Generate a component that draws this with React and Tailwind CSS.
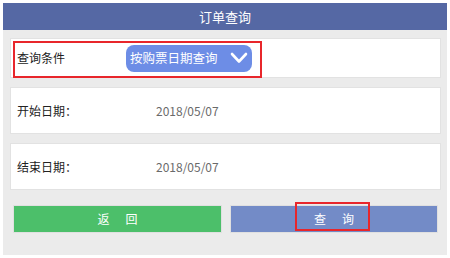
import React from 'react'

const font = { fontFamily: '"Noto Sans CJK SC", "Liberation Sans", sans-serif' }

const DateRow = ({ label, value }) => (
  <div className="h-[47px] bg-white border border-[#e2e2e2] flex items-center">
    <span className="ml-[6px] w-[139px] text-[12px] text-[#222]">{label}</span>
    <span className="text-[12px] text-[#6a6a6a]">{value}</span>
  </div>
)

const App = () => {
  return (
    <div className="w-[450px] h-[258px] bg-white pt-[3px] pl-[3px]" style={font}>
      <div className="w-[444px] h-[252px] bg-[#ebebeb] flex flex-col">
        <div className="h-[27px] bg-[#5568a4] text-white text-[13px] flex items-center justify-center">
          订单查询
        </div>

        <div className="px-[7px] pr-[6px] pt-[8px] flex flex-col gap-[9px]">
          <div className="relative h-[40px] bg-white border border-[#e2e2e2] flex items-center">
            <span className="ml-[6px] w-[109px] text-[12px] text-[#222]">查询条件</span>
            <div className="w-[126px] h-[27px] rounded-[8px] bg-[#6d8de6] flex items-center pl-[4px] pr-[4px] justify-between">
              <span className="text-white text-[12.5px]">按购票日期查询</span>
              <svg width="18" height="12" viewBox="0 0 18 12">
                <path d="M2 2 L9 9.5 L16 2" fill="none" stroke="white" strokeWidth="2.6" strokeLinecap="round" strokeLinejoin="round" />
              </svg>
            </div>
            <div className="absolute left-[2px] top-[2px] w-[249px] h-[37px] border-2 border-[#e8262b]" />
          </div>

          <DateRow label="开始日期：" value="2018/05/07" />
          <DateRow label="结束日期：" value="2018/05/07" />
        </div>

        <div className="flex pl-[10px] mt-[15px] gap-[8px]">
          <button className="w-[209px] h-[28px] bg-[#4cbf6a] border border-[#e0e0e0] text-white text-[12px] flex items-center justify-center gap-[16px]">
            <span>返</span>
            <span>回</span>
          </button>
          <div className="relative">
            <button className="w-[208px] h-[28px] bg-[#738bc7] border border-[#e0e0e0] text-white text-[12px] flex items-center justify-center gap-[16px]">
              <span>查</span>
              <span>询</span>
            </button>
            <div className="absolute left-[65px] top-[-3px] w-[75px] h-[29px] border-2 border-[#e8262b]" />
          </div>
        </div>
      </div>
    </div>
  )
}

export default App
